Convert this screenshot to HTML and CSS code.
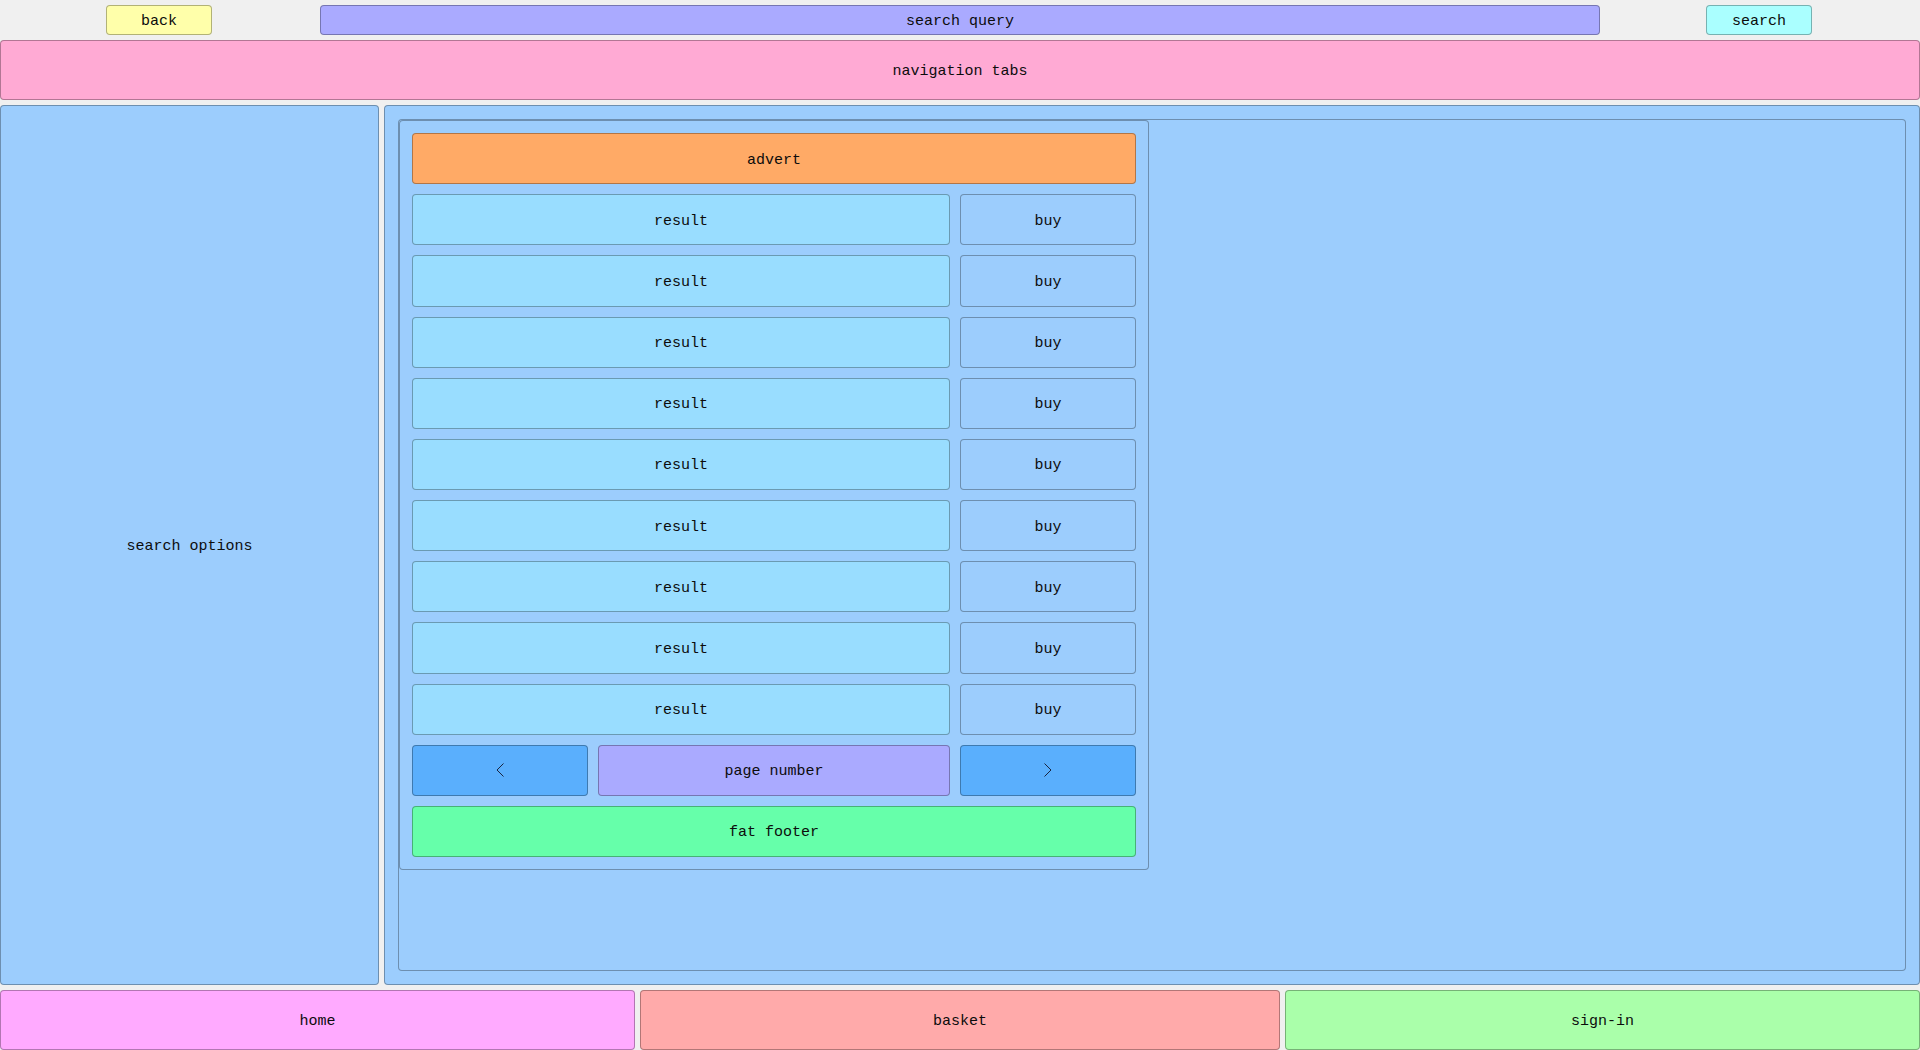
FILE: index.html
```html
<!DOCTYPE html>
<html lang="en">
<head>
<meta charset="utf-8">
<title>Search results wireframe</title>
<link rel="stylesheet" href="styles.css">
</head>
<body>
<div class="page">
  <header class="topbar">
    <div class="box back">back</div>
    <div class="box query">search query</div>
    <div class="box search">search</div>
  </header>
  <nav class="box tabs">navigation tabs</nav>
  <div class="content">
    <aside class="box options">search options</aside>
    <main class="box mainpanel">
      <div class="box canvas">
        <div class="box results">
          <div class="box advert">advert</div>
          <div class="box result">result</div><div class="box buy">buy</div>
          <div class="box result">result</div><div class="box buy">buy</div>
          <div class="box result">result</div><div class="box buy">buy</div>
          <div class="box result">result</div><div class="box buy">buy</div>
          <div class="box result">result</div><div class="box buy">buy</div>
          <div class="box result">result</div><div class="box buy">buy</div>
          <div class="box result">result</div><div class="box buy">buy</div>
          <div class="box result">result</div><div class="box buy">buy</div>
          <div class="box result">result</div><div class="box buy">buy</div>
          <div class="box pager"><svg class="chev" width="8" height="14" viewBox="0 0 8 14"><polyline points="7.5,0.5 1,7 7.5,13.5"/></svg></div>
          <div class="box pagenum">page number</div>
          <div class="box pager"><svg class="chev" width="8" height="14" viewBox="0 0 8 14"><polyline points="0.5,0.5 7,7 0.5,13.5"/></svg></div>
          <div class="box fatfooter">fat footer</div>
        </div>
      </div>
    </main>
  </div>
  <footer class="bottombar">
    <div class="box home">home</div>
    <div class="box basket">basket</div>
    <div class="box signin">sign-in</div>
  </footer>
</div>
</body>
</html>
```
FILE: styles.css
```css
* { box-sizing: border-box; }
html, body { margin: 0; padding: 0; }
body {
  background: #f0f0f0;
  font-family: "Liberation Mono", "DejaVu Sans Mono", monospace;
  font-size: 15px;
  color: #0c0c0c;
}
.page {
  display: grid;
  grid-template-rows: 35px 60px 1fr 60px;
  row-gap: 5px;
  height: 1050px;
  width: 1920px;
}
.box {
  border: 1px solid rgba(0, 0, 0, 0.3);
  border-radius: 4px;
  display: flex;
  align-items: center;
  justify-content: center;
  padding-top: 3px;
}
.topbar {
  display: grid;
  grid-template-columns: 320px 1280px 320px;
  padding-top: 5px;
}
.back {
  width: 106px;
  justify-self: center;
  margin-right: 2px;
  background: #ffffaa;
}
.query { background: #aaaaff; }
.search {
  width: 106px;
  justify-self: center;
  margin-right: 2px;
  background: #aaffff;
}
.tabs { background: #ffaad4; }
.content {
  display: grid;
  grid-template-columns: 379px 1fr;
  column-gap: 5px;
  min-height: 0;
}
.options { background: #9ccdfd; }
.mainpanel {
  background: #9ccdfd;
  padding: 13px;
  align-items: stretch;
  justify-content: stretch;
}
.canvas {
  flex: 1;
  padding: 0;
  background: #9ccdfd;
  align-items: flex-start;
  justify-content: flex-start;
}
.results {
  display: grid;
  width: 750px;
  height: 750px;
  padding: 12px;
  grid-template-columns: 1fr 2fr 1fr;
  grid-template-rows: repeat(12, 1fr);
  gap: 10px;
  align-items: stretch;
  justify-items: stretch;
  background: #9ccdfd;
}
.advert { grid-column: 1 / -1; background: #ffaa66; }
.result { grid-column: 1 / 3; background: #99ddff; }
.buy { background: #9ccdfd; }
.pager { background: #5aaffd; padding-top: 0; }
.pagenum { background: #aaaaff; }
.fatfooter { grid-column: 1 / -1; background: #66ffaa; }
.chev polyline {
  fill: none;
  stroke: #1a2540;
  stroke-width: 1;
}
.bottombar {
  display: grid;
  grid-template-columns: 635px 640px 1fr;
  column-gap: 5px;
}
.home { background: #ffaaff; }
.basket { background: #ffaaaa; }
.signin { background: #aaffaa; }
```
